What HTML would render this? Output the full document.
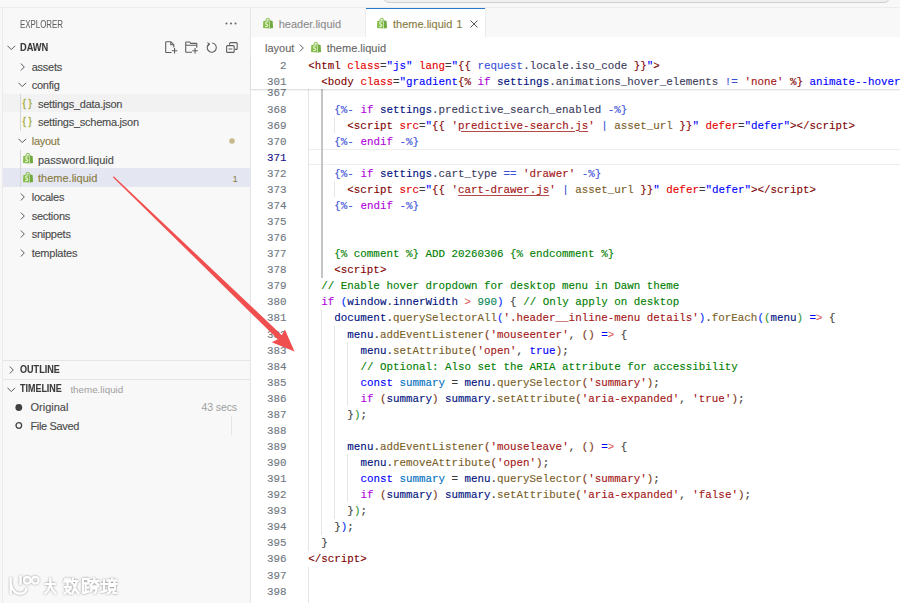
<!DOCTYPE html>
<html><head><meta charset="utf-8">
<style>
*{box-sizing:border-box;margin:0;padding:0}
html,body{width:900px;height:603px;overflow:hidden;background:#f8f8f8;font-family:"Liberation Sans",sans-serif;position:relative}
#topbar{position:absolute;left:0;top:0;width:900px;height:8px;background:#f8f8f8;border-bottom:1px solid #ececec}
#cmd{position:absolute;left:382.5px;top:-20px;width:507px;height:23px;border:1.3px solid #cfcfcf;border-radius:6px;background:#efefef}
#side{position:absolute;left:2px;top:8px;width:249px;height:595px;background:#f8f8f8;border-left:1px solid #ebebeb;border-right:1px solid #e5e5e5}
.t{position:absolute;font-size:11px;line-height:14px;height:14px;color:#4a4a4a;white-space:pre;-webkit-text-stroke:0.12px currentColor}
.ls{letter-spacing:-0.25px}
.hdr{font-weight:bold;font-size:9.6px;color:#3b3b3b}
.sel{position:absolute;left:0;width:248px;height:18.3px}
svg{position:absolute;overflow:visible}
#editor{position:absolute;left:251px;top:37px;width:649px;height:566px;background:#fff}
#tabs{position:absolute;left:251px;top:8px;width:649px;height:30px;background:#f8f8f8;border-bottom:1px solid #e5e5e5}
.ln{position:absolute;left:251px;width:35.5px;text-align:right;height:16px;font-family:"Liberation Mono",monospace;font-size:10.85px;line-height:16px;color:#6e7681;-webkit-text-stroke:0.12px currentColor}
.ln.cur{color:#171184}
.cl{position:absolute;height:16px;font-family:"Liberation Mono",monospace;font-size:10.85px;line-height:16px;white-space:pre;color:#3b3b3b;-webkit-text-stroke:0.12px currentColor}
.ig{position:absolute;width:1px;height:16.2px;background:#e5e5e5}
#sticky{position:absolute;left:251px;top:56.82px;width:649px;height:32.14px;background:#fff;box-shadow:0 1px 1.5px rgba(0,0,0,0.16)}
.curl{position:absolute;left:308.3px;width:592px;height:16.07px;border-top:1.7px solid #eeeeee;border-bottom:1.7px solid #eeeeee}
.ig.ag{background:#c4c4c4;width:1.3px}
</style></head><body>
<div id="topbar"><div id="cmd"></div></div>

<div id="side"></div>
<!-- sidebar content, absolute to body -->
<div class="sel" style="left:3px;top:94px;background:#f2f2f2;width:247px"></div>
<div class="sel" style="left:3px;top:168.3px;background:#e4e6f1;width:247px;height:18.4px"></div>

<div class="t" style="left:20px;top:17.5px;font-size:10px;color:#5f5f5f;-webkit-text-stroke:0.05px #5f5f5f;transform:scaleX(0.79);transform-origin:0 0">EXPLORER</div>
<svg style="left:225px;top:22px" width="12" height="3"><circle cx="1.5" cy="1.5" r="1" fill="#616161"/><circle cx="6" cy="1.5" r="1" fill="#616161"/><circle cx="10.5" cy="1.5" r="1" fill="#616161"/></svg>

<!-- DAWN -->
<svg style="left:7px;top:45px" width="9" height="6"><path d="M0.5 0.8 L4.3 4.6 L8.1 0.8" fill="none" stroke="#5a5a5a" stroke-width="1"/></svg>
<div class="t hdr" style="left:20px;top:40.5px;font-size:10.3px;transform:scaleX(0.9);transform-origin:0 0">DAWN</div>
<!-- action icons -->
<svg style="left:165px;top:41px" width="13" height="13" viewBox="0 0 13 13"><path d="M6.5 11.5H1.2Q0.7 11.5 0.7 11V1.2Q0.7 0.7 1.2 0.7H5.8L8.8 3.7V6.5 M5.8 0.7V3.7H8.8 M6.8 9.8H12.3 M9.55 7V12.5" fill="none" stroke="#5f5f5f" stroke-width="1.1"/></svg>
<svg style="left:184.5px;top:41px" width="14" height="13" viewBox="0 0 14 13"><path d="M7 11.3H1.2Q0.7 11.3 0.7 10.8V1.5Q0.7 1 1.2 1H4.6L5.8 2.4H11.3Q11.8 2.4 11.8 2.9V6.8 M0.7 4.3H11.8 M7.3 9.8H12.8 M10.05 7V12.5" fill="none" stroke="#5f5f5f" stroke-width="1.1"/></svg>
<svg style="left:205.5px;top:41.5px" width="12" height="11" viewBox="0 0 12 11"><path d="M3 1.9 A4.6 4.6 0 1 0 6.2 1" fill="none" stroke="#5f5f5f" stroke-width="1.1"/><path d="M1.4 0.6 L3.4 1.9 L2.2 4" fill="none" stroke="#5f5f5f" stroke-width="1.1"/></svg>
<svg style="left:225.5px;top:41.5px" width="12" height="11" viewBox="0 0 12 11"><path d="M3.6 2.8V1.6Q3.6 0.6 4.6 0.6H10.2Q11.2 0.6 11.2 1.6V6.4Q11.2 7.4 10.2 7.4H9 M1.6 3.6H7.2Q8.2 3.6 8.2 4.6V9.4Q8.2 10.4 7.2 10.4H1.6Q0.6 10.4 0.6 9.4V4.6Q0.6 3.6 1.6 3.6Z M2.5 7H6.3" fill="none" stroke="#5f5f5f" stroke-width="1.1"/></svg>

<!-- tree -->
<svg style="left:20px;top:63px" width="6" height="8"><path d="M0.8 0.5 L4.3 4 L0.8 7.5" fill="none" stroke="#5a5a5a" stroke-width="1"/></svg>
<div class="t ls" style="left:31.7px;top:59.5px">assets</div>
<svg style="left:18px;top:82px" width="9" height="6"><path d="M0.5 0.8 L4.3 4.6 L8.1 0.8" fill="none" stroke="#5a5a5a" stroke-width="1"/></svg>
<div class="t ls" style="left:31.7px;top:78px">config</div>
<div style="position:absolute;left:19.5px;top:94px;width:1px;height:37px;background:#d6d6d6"></div>
<div class="t" style="left:22.5px;top:96.5px;color:#a3ad3c;font-size:10px;-webkit-text-stroke:0.3px #a3ad3c">{ }</div>
<div class="t ls" style="left:38px;top:96.5px">settings_data.json</div>
<div class="t" style="left:22.5px;top:115px;color:#a3ad3c;font-size:10px;-webkit-text-stroke:0.3px #a3ad3c">{ }</div>
<div class="t ls" style="left:38px;top:115px">settings_schema.json</div>
<svg style="left:18px;top:138px" width="9" height="6"><path d="M0.5 0.8 L4.3 4.6 L8.1 0.8" fill="none" stroke="#5a5a5a" stroke-width="1"/></svg>
<div class="t ls" style="left:31.7px;top:134px;color:#887b3f">layout</div>
<svg style="left:229px;top:138px" width="6" height="6"><circle cx="3" cy="3" r="2.8" fill="#c9b98a"/></svg>
<div style="position:absolute;left:19.5px;top:150px;width:1px;height:37px;background:#d6d6d6"></div>
<svg style="left:22.5px;top:153px" width="10" height="11" viewBox="0 0 10 11" id="shop1"><path d="M2.8 2.6 Q3.2 0.3 4.9 0.3 Q6.4 0.4 6.6 2.6" fill="none" stroke="#8dc15a" stroke-width="1.1"/><path d="M0.3 2.9 L6.4 2.3 L6.4 10.4 L0 10 Z" fill="#86bd4e"/><path d="M6.9 2.3 L9.6 2.9 L10.1 9.9 L6.9 10.4 Z" fill="#72aa40"/><path d="M5 3.9 Q2.6 3.6 2.7 5.2 Q2.9 6.4 4 6.6 Q5 7.1 4.2 8.3 Q3.3 8.8 2.2 8.2" fill="none" stroke="#e2f3c8" stroke-width="1.2"/></svg>
<div class="t" style="left:38px;top:152.5px">password.liquid</div>
<svg style="left:22.5px;top:171.5px" width="10" height="11" viewBox="0 0 10 11"><path d="M2.8 2.6 Q3.2 0.3 4.9 0.3 Q6.4 0.4 6.6 2.6" fill="none" stroke="#8dc15a" stroke-width="1.1"/><path d="M0.3 2.9 L6.4 2.3 L6.4 10.4 L0 10 Z" fill="#86bd4e"/><path d="M6.9 2.3 L9.6 2.9 L10.1 9.9 L6.9 10.4 Z" fill="#72aa40"/><path d="M5 3.9 Q2.6 3.6 2.7 5.2 Q2.9 6.4 4 6.6 Q5 7.1 4.2 8.3 Q3.3 8.8 2.2 8.2" fill="none" stroke="#e2f3c8" stroke-width="1.2"/></svg>
<div class="t" style="left:38px;top:171px;color:#887b3f">theme.liquid</div>
<div class="t" style="left:232.5px;top:171.5px;color:#887b3f;font-size:9.5px;-webkit-text-stroke:0">1</div>
<svg style="left:20px;top:193px" width="6" height="8"><path d="M0.8 0.5 L4.3 4 L0.8 7.5" fill="none" stroke="#5a5a5a" stroke-width="1"/></svg>
<div class="t ls" style="left:31.7px;top:190px">locales</div>
<svg style="left:20px;top:211.5px" width="6" height="8"><path d="M0.8 0.5 L4.3 4 L0.8 7.5" fill="none" stroke="#5a5a5a" stroke-width="1"/></svg>
<div class="t ls" style="left:31.7px;top:208.5px">sections</div>
<svg style="left:20px;top:230px" width="6" height="8"><path d="M0.8 0.5 L4.3 4 L0.8 7.5" fill="none" stroke="#5a5a5a" stroke-width="1"/></svg>
<div class="t ls" style="left:31.7px;top:227px">snippets</div>
<svg style="left:20px;top:248.5px" width="6" height="8"><path d="M0.8 0.5 L4.3 4 L0.8 7.5" fill="none" stroke="#5a5a5a" stroke-width="1"/></svg>
<div class="t ls" style="left:31.7px;top:245.5px">templates</div>

<!-- outline / timeline -->
<div style="position:absolute;left:3px;top:360px;width:247px;height:1px;background:#e5e5e5"></div>
<svg style="left:9px;top:366px" width="6" height="8"><path d="M0.8 0.5 L4.3 4 L0.8 7.5" fill="none" stroke="#5a5a5a" stroke-width="1"/></svg>
<div class="t hdr" style="left:19.8px;top:363px;font-size:10.3px;transform:scaleX(0.88);transform-origin:0 0">OUTLINE</div>
<div style="position:absolute;left:3px;top:379px;width:247px;height:1px;background:#e5e5e5"></div>
<svg style="left:7px;top:386.5px" width="9" height="6"><path d="M0.5 0.8 L4.3 4.6 L8.1 0.8" fill="none" stroke="#5a5a5a" stroke-width="1"/></svg>
<div class="t hdr" style="left:20px;top:382px;font-size:10.3px;transform:scaleX(0.87);transform-origin:0 0">TIMELINE</div>
<div class="t" style="left:70.4px;top:382.5px;font-size:9.8px;color:#a0a0a0;-webkit-text-stroke:0">theme.liquid</div>
<svg style="left:15px;top:403.5px" width="8" height="8"><circle cx="3.8" cy="3.5" r="3.4" fill="#424242"/></svg>
<div class="t" style="left:30.5px;top:400px">Original</div>
<div class="t" style="left:201.5px;top:400px;color:#a0a0a0;font-size:10.5px;-webkit-text-stroke:0;letter-spacing:-0.1px">43 secs</div>
<svg style="left:15px;top:422px" width="8" height="8"><circle cx="3.8" cy="3.5" r="2.8" fill="none" stroke="#424242" stroke-width="1.3"/></svg>
<div class="t" style="left:30.5px;top:418.5px;letter-spacing:-0.35px">File Saved</div>
<div style="position:absolute;left:231px;top:416px;width:1px;height:19px;background:#e6e6e6"></div>

<div id="tabs">
  <div style="position:absolute;left:114px;top:0;width:120px;height:30px;background:#fff;border-top:1.5px solid #2b78c6"></div>
  <div style="position:absolute;left:113.5px;top:0;width:1px;height:29px;background:#ececec"></div>
  <div style="position:absolute;left:234px;top:0;width:1px;height:29px;background:#ececec"></div>
</div>
<svg style="left:262.7px;top:18px" width="10" height="11" viewBox="0 0 10 11"><path d="M2.8 2.6 Q3.2 0.3 4.9 0.3 Q6.4 0.4 6.6 2.6" fill="none" stroke="#8dc15a" stroke-width="1.1"/><path d="M0.3 2.9 L6.4 2.3 L6.4 10.4 L0 10 Z" fill="#86bd4e"/><path d="M6.9 2.3 L9.6 2.9 L10.1 9.9 L6.9 10.4 Z" fill="#72aa40"/><path d="M5 3.9 Q2.6 3.6 2.7 5.2 Q2.9 6.4 4 6.6 Q5 7.1 4.2 8.3 Q3.3 8.8 2.2 8.2" fill="none" stroke="#e2f3c8" stroke-width="1.2"/></svg>
<div class="t" style="left:278.7px;top:17px;color:#8c8c8c;-webkit-text-stroke:0.1px #8c8c8c">header.liquid</div>
<svg style="left:377px;top:18px" width="10" height="11" viewBox="0 0 10 11"><path d="M2.8 2.6 Q3.2 0.3 4.9 0.3 Q6.4 0.4 6.6 2.6" fill="none" stroke="#8dc15a" stroke-width="1.1"/><path d="M0.3 2.9 L6.4 2.3 L6.4 10.4 L0 10 Z" fill="#86bd4e"/><path d="M6.9 2.3 L9.6 2.9 L10.1 9.9 L6.9 10.4 Z" fill="#72aa40"/><path d="M5 3.9 Q2.6 3.6 2.7 5.2 Q2.9 6.4 4 6.6 Q5 7.1 4.2 8.3 Q3.3 8.8 2.2 8.2" fill="none" stroke="#e2f3c8" stroke-width="1.2"/></svg>
<div class="t" style="left:393px;top:17px;color:#887b3f">theme.liquid</div>
<div class="t" style="left:456.5px;top:17.3px;color:#887b3f;font-size:10.5px">1</div>
<svg style="left:469.5px;top:20px" width="8" height="8"><path d="M0.5 0.5L7.5 7.5M7.5 0.5L0.5 7.5" stroke="#5a5a5a" stroke-width="1"/></svg>

<div id="editor"></div>
<!-- breadcrumbs -->
<div class="t" style="left:265px;top:41px;color:#666;-webkit-text-stroke:0.1px #666">layout</div>
<svg style="left:299px;top:43.5px" width="6" height="8"><path d="M0.8 0.5 L4.3 4 L0.8 7.5" fill="none" stroke="#616161" stroke-width="1"/></svg>
<svg style="left:311px;top:42px" width="10" height="11" viewBox="0 0 10 11"><path d="M2.8 2.6 Q3.2 0.3 4.9 0.3 Q6.4 0.4 6.6 2.6" fill="none" stroke="#8dc15a" stroke-width="1.1"/><path d="M0.3 2.9 L6.4 2.3 L6.4 10.4 L0 10 Z" fill="#86bd4e"/><path d="M6.9 2.3 L9.6 2.9 L10.1 9.9 L6.9 10.4 Z" fill="#72aa40"/><path d="M5 3.9 Q2.6 3.6 2.7 5.2 Q2.9 6.4 4 6.6 Q5 7.1 4.2 8.3 Q3.3 8.8 2.2 8.2" fill="none" stroke="#e2f3c8" stroke-width="1.2"/></svg>
<div class="t" style="left:326.7px;top:41px;color:#666;-webkit-text-stroke:0.1px #666">theme.liquid</div>

<div class="ln" style="top:85.45px">367</div>
<div class="ig" style="left:308.30px;top:84.55px"></div>
<div class="ig ag" style="left:321.32px;top:84.55px"></div>
<div class="ln" style="top:101.52px">368</div>
<div class="ig" style="left:308.30px;top:100.62px"></div>
<div class="ig ag" style="left:321.32px;top:100.62px"></div>
<div class="cl" style="top:101.52px;left:334.34px"><span style="color:#3a50d8">{%-</span><span style="color:#3b3b3b"> </span><span style="color:#af00db">if</span><span style="color:#3b3b3b"> </span><span style="color:#001080">settings</span><span style="color:#3b3b5b">.predictive_search_enabled</span><span style="color:#3b3b3b"> </span><span style="color:#3a50d8">-%}</span></div>
<div class="ln" style="top:117.59px">369</div>
<div class="ig" style="left:308.30px;top:116.69px"></div>
<div class="ig ag" style="left:321.32px;top:116.69px"></div>
<div class="ig" style="left:334.34px;top:116.69px"></div>
<div class="cl" style="top:117.59px;left:347.36px"><span style="color:#800000">&lt;script</span><span style="color:#3b3b3b"> </span><span style="color:#e50000">src</span><span style="color:#3b3b3b">=</span><span style="color:#0000ff">&quot;</span><span style="color:#800000">{{</span><span style="color:#3b3b3b"> </span><span style="color:#a31515">&#x27;</span><span style="color:#a31515;text-decoration:underline;text-decoration-color:#b54848;text-underline-offset:2px">predictive-search.js</span><span style="color:#a31515">&#x27;</span><span style="color:#3b3b3b"> </span><span style="color:#3a50d8">|</span><span style="color:#3b3b3b"> </span><span style="color:#795e26">asset_url</span><span style="color:#3b3b3b"> </span><span style="color:#800000">}}</span><span style="color:#0000ff">&quot;</span><span style="color:#3b3b3b"> </span><span style="color:#e50000">defer</span><span style="color:#3b3b3b">=</span><span style="color:#0000ff">&quot;defer&quot;</span><span style="color:#800000">&gt;&lt;/script&gt;</span></div>
<div class="ln" style="top:133.66px">370</div>
<div class="ig" style="left:308.30px;top:132.76px"></div>
<div class="ig ag" style="left:321.32px;top:132.76px"></div>
<div class="cl" style="top:133.66px;left:334.34px"><span style="color:#3a50d8">{%-</span><span style="color:#3b3b3b"> </span><span style="color:#af00db">endif</span><span style="color:#3b3b3b"> </span><span style="color:#3a50d8">-%}</span></div>
<div class="curl" style="top:148.83px"></div>
<div class="ln cur" style="top:149.73px">371</div>
<div class="ig" style="left:308.30px;top:148.83px"></div>
<div class="ig ag" style="left:321.32px;top:148.83px"></div>
<div class="ln" style="top:165.80px">372</div>
<div class="ig" style="left:308.30px;top:164.90px"></div>
<div class="ig ag" style="left:321.32px;top:164.90px"></div>
<div class="cl" style="top:165.80px;left:334.34px"><span style="color:#3a50d8">{%-</span><span style="color:#3b3b3b"> </span><span style="color:#af00db">if</span><span style="color:#3b3b3b"> </span><span style="color:#001080">settings</span><span style="color:#3b3b5b">.cart_type</span><span style="color:#3b3b3b"> </span><span style="color:#3a50d8">==</span><span style="color:#3b3b3b"> </span><span style="color:#a31515">&#x27;drawer&#x27;</span><span style="color:#3b3b3b"> </span><span style="color:#3a50d8">-%}</span></div>
<div class="ln" style="top:181.87px">373</div>
<div class="ig" style="left:308.30px;top:180.97px"></div>
<div class="ig ag" style="left:321.32px;top:180.97px"></div>
<div class="ig" style="left:334.34px;top:180.97px"></div>
<div class="cl" style="top:181.87px;left:347.36px"><span style="color:#800000">&lt;script</span><span style="color:#3b3b3b"> </span><span style="color:#e50000">src</span><span style="color:#3b3b3b">=</span><span style="color:#0000ff">&quot;</span><span style="color:#800000">{{</span><span style="color:#3b3b3b"> </span><span style="color:#a31515">&#x27;</span><span style="color:#a31515;text-decoration:underline;text-decoration-color:#b54848;text-underline-offset:2px">cart-drawer.js</span><span style="color:#a31515">&#x27;</span><span style="color:#3b3b3b"> </span><span style="color:#3a50d8">|</span><span style="color:#3b3b3b"> </span><span style="color:#795e26">asset_url</span><span style="color:#3b3b3b"> </span><span style="color:#800000">}}</span><span style="color:#0000ff">&quot;</span><span style="color:#3b3b3b"> </span><span style="color:#e50000">defer</span><span style="color:#3b3b3b">=</span><span style="color:#0000ff">&quot;defer&quot;</span><span style="color:#800000">&gt;&lt;/script&gt;</span></div>
<div class="ln" style="top:197.94px">374</div>
<div class="ig" style="left:308.30px;top:197.04px"></div>
<div class="ig ag" style="left:321.32px;top:197.04px"></div>
<div class="cl" style="top:197.94px;left:334.34px"><span style="color:#3a50d8">{%-</span><span style="color:#3b3b3b"> </span><span style="color:#af00db">endif</span><span style="color:#3b3b3b"> </span><span style="color:#3a50d8">-%}</span></div>
<div class="ln" style="top:214.01px">375</div>
<div class="ig" style="left:308.30px;top:213.11px"></div>
<div class="ig ag" style="left:321.32px;top:213.11px"></div>
<div class="ln" style="top:230.08px">376</div>
<div class="ig" style="left:308.30px;top:229.18px"></div>
<div class="ig ag" style="left:321.32px;top:229.18px"></div>
<div class="ln" style="top:246.15px">377</div>
<div class="ig" style="left:308.30px;top:245.25px"></div>
<div class="ig ag" style="left:321.32px;top:245.25px"></div>
<div class="cl" style="top:246.15px;left:334.34px"><span style="color:#008000">{% comment %} ADD 20260306 {% endcomment %}</span></div>
<div class="ln" style="top:262.22px">378</div>
<div class="ig" style="left:308.30px;top:261.32px"></div>
<div class="ig ag" style="left:321.32px;top:261.32px"></div>
<div class="cl" style="top:262.22px;left:334.34px"><span style="color:#800000">&lt;script&gt;</span></div>
<div class="ln" style="top:278.29px">379</div>
<div class="ig" style="left:308.30px;top:277.39px"></div>
<div class="cl" style="top:278.29px;left:321.32px"><span style="color:#008000">// Enable hover dropdown for desktop menu in Dawn theme</span></div>
<div class="ln" style="top:294.36px">380</div>
<div class="ig" style="left:308.30px;top:293.46px"></div>
<div class="cl" style="top:294.36px;left:321.32px"><span style="color:#af00db">if</span><span style="color:#3b3b3b"> </span><span style="color:#0431fa">(</span><span style="color:#001080">window</span><span style="color:#3b3b3b">.</span><span style="color:#001080">innerWidth</span><span style="color:#3b3b3b"> </span><span style="color:#e06060">&gt;</span><span style="color:#3b3b3b"> </span><span style="color:#098658">990</span><span style="color:#0431fa">)</span><span style="color:#3b3b3b"> {</span><span style="color:#3b3b3b"> </span><span style="color:#008000">// Only apply on desktop</span></div>
<div class="ln" style="top:310.43px">381</div>
<div class="ig" style="left:308.30px;top:309.53px"></div>
<div class="ig" style="left:321.32px;top:309.53px"></div>
<div class="cl" style="top:310.43px;left:334.34px"><span style="color:#001080">document</span><span style="color:#3b3b3b">.</span><span style="color:#795e26">querySelectorAll</span><span style="color:#0431fa">(</span><span style="color:#a31515">&#x27;.header__inline-menu details&#x27;</span><span style="color:#0431fa">)</span><span style="color:#3b3b3b">.</span><span style="color:#795e26">forEach</span><span style="color:#0431fa">(</span><span style="color:#319331">(</span><span style="color:#001080">menu</span><span style="color:#319331">)</span><span style="color:#3b3b3b"> </span><span style="color:#0000ff">=</span><span style="color:#e06060">&gt;</span><span style="color:#3b3b3b"> {</span></div>
<div class="ln" style="top:326.50px">382</div>
<div class="ig" style="left:308.30px;top:325.60px"></div>
<div class="ig" style="left:321.32px;top:325.60px"></div>
<div class="ig" style="left:334.34px;top:325.60px"></div>
<div class="cl" style="top:326.50px;left:347.36px"><span style="color:#001080">menu</span><span style="color:#3b3b3b">.</span><span style="color:#795e26">addEventListener</span><span style="color:#7b3814">(</span><span style="color:#a31515">&#x27;mouseenter&#x27;</span><span style="color:#3b3b3b">, </span><span style="color:#7b3814">()</span><span style="color:#3b3b3b"> </span><span style="color:#0000ff">=</span><span style="color:#e06060">&gt;</span><span style="color:#3b3b3b"> {</span></div>
<div class="ln" style="top:342.57px">383</div>
<div class="ig" style="left:308.30px;top:341.67px"></div>
<div class="ig" style="left:321.32px;top:341.67px"></div>
<div class="ig" style="left:334.34px;top:341.67px"></div>
<div class="ig" style="left:347.36px;top:341.67px"></div>
<div class="cl" style="top:342.57px;left:360.38px"><span style="color:#001080">menu</span><span style="color:#3b3b3b">.</span><span style="color:#795e26">setAttribute</span><span style="color:#7b3814">(</span><span style="color:#a31515">&#x27;open&#x27;</span><span style="color:#3b3b3b">, </span><span style="color:#0000ff">true</span><span style="color:#7b3814">)</span><span style="color:#3b3b3b">;</span></div>
<div class="ln" style="top:358.64px">384</div>
<div class="ig" style="left:308.30px;top:357.74px"></div>
<div class="ig" style="left:321.32px;top:357.74px"></div>
<div class="ig" style="left:334.34px;top:357.74px"></div>
<div class="ig" style="left:347.36px;top:357.74px"></div>
<div class="cl" style="top:358.64px;left:360.38px"><span style="color:#008000">// Optional: Also set the ARIA attribute for accessibility</span></div>
<div class="ln" style="top:374.71px">385</div>
<div class="ig" style="left:308.30px;top:373.81px"></div>
<div class="ig" style="left:321.32px;top:373.81px"></div>
<div class="ig" style="left:334.34px;top:373.81px"></div>
<div class="ig" style="left:347.36px;top:373.81px"></div>
<div class="cl" style="top:374.71px;left:360.38px"><span style="color:#0000ff">const</span><span style="color:#3b3b3b"> </span><span style="color:#0070c1">summary</span><span style="color:#3b3b3b"> = </span><span style="color:#001080">menu</span><span style="color:#3b3b3b">.</span><span style="color:#795e26">querySelector</span><span style="color:#7b3814">(</span><span style="color:#a31515">&#x27;summary&#x27;</span><span style="color:#7b3814">)</span><span style="color:#3b3b3b">;</span></div>
<div class="ln" style="top:390.78px">386</div>
<div class="ig" style="left:308.30px;top:389.88px"></div>
<div class="ig" style="left:321.32px;top:389.88px"></div>
<div class="ig" style="left:334.34px;top:389.88px"></div>
<div class="ig" style="left:347.36px;top:389.88px"></div>
<div class="cl" style="top:390.78px;left:360.38px"><span style="color:#af00db">if</span><span style="color:#3b3b3b"> </span><span style="color:#7b3814">(</span><span style="color:#001080">summary</span><span style="color:#7b3814">)</span><span style="color:#3b3b3b"> </span><span style="color:#001080">summary</span><span style="color:#3b3b3b">.</span><span style="color:#795e26">setAttribute</span><span style="color:#7b3814">(</span><span style="color:#a31515">&#x27;aria-expanded&#x27;</span><span style="color:#3b3b3b">, </span><span style="color:#a31515">&#x27;true&#x27;</span><span style="color:#7b3814">)</span><span style="color:#3b3b3b">;</span></div>
<div class="ln" style="top:406.85px">387</div>
<div class="ig" style="left:308.30px;top:405.95px"></div>
<div class="ig" style="left:321.32px;top:405.95px"></div>
<div class="ig" style="left:334.34px;top:405.95px"></div>
<div class="cl" style="top:406.85px;left:347.36px"><span style="color:#3b3b3b">}</span><span style="color:#319331">)</span><span style="color:#3b3b3b">;</span></div>
<div class="ln" style="top:422.92px">388</div>
<div class="ig" style="left:308.30px;top:422.02px"></div>
<div class="ig" style="left:321.32px;top:422.02px"></div>
<div class="ig" style="left:334.34px;top:422.02px"></div>
<div class="ln" style="top:438.99px">389</div>
<div class="ig" style="left:308.30px;top:438.09px"></div>
<div class="ig" style="left:321.32px;top:438.09px"></div>
<div class="ig" style="left:334.34px;top:438.09px"></div>
<div class="cl" style="top:438.99px;left:347.36px"><span style="color:#001080">menu</span><span style="color:#3b3b3b">.</span><span style="color:#795e26">addEventListener</span><span style="color:#7b3814">(</span><span style="color:#a31515">&#x27;mouseleave&#x27;</span><span style="color:#3b3b3b">, </span><span style="color:#7b3814">()</span><span style="color:#3b3b3b"> </span><span style="color:#0000ff">=</span><span style="color:#e06060">&gt;</span><span style="color:#3b3b3b"> {</span></div>
<div class="ln" style="top:455.06px">390</div>
<div class="ig" style="left:308.30px;top:454.16px"></div>
<div class="ig" style="left:321.32px;top:454.16px"></div>
<div class="ig" style="left:334.34px;top:454.16px"></div>
<div class="ig" style="left:347.36px;top:454.16px"></div>
<div class="cl" style="top:455.06px;left:360.38px"><span style="color:#001080">menu</span><span style="color:#3b3b3b">.</span><span style="color:#795e26">removeAttribute</span><span style="color:#7b3814">(</span><span style="color:#a31515">&#x27;open&#x27;</span><span style="color:#7b3814">)</span><span style="color:#3b3b3b">;</span></div>
<div class="ln" style="top:471.13px">391</div>
<div class="ig" style="left:308.30px;top:470.23px"></div>
<div class="ig" style="left:321.32px;top:470.23px"></div>
<div class="ig" style="left:334.34px;top:470.23px"></div>
<div class="ig" style="left:347.36px;top:470.23px"></div>
<div class="cl" style="top:471.13px;left:360.38px"><span style="color:#0000ff">const</span><span style="color:#3b3b3b"> </span><span style="color:#0070c1">summary</span><span style="color:#3b3b3b"> = </span><span style="color:#001080">menu</span><span style="color:#3b3b3b">.</span><span style="color:#795e26">querySelector</span><span style="color:#7b3814">(</span><span style="color:#a31515">&#x27;summary&#x27;</span><span style="color:#7b3814">)</span><span style="color:#3b3b3b">;</span></div>
<div class="ln" style="top:487.20px">392</div>
<div class="ig" style="left:308.30px;top:486.30px"></div>
<div class="ig" style="left:321.32px;top:486.30px"></div>
<div class="ig" style="left:334.34px;top:486.30px"></div>
<div class="ig" style="left:347.36px;top:486.30px"></div>
<div class="cl" style="top:487.20px;left:360.38px"><span style="color:#af00db">if</span><span style="color:#3b3b3b"> </span><span style="color:#7b3814">(</span><span style="color:#001080">summary</span><span style="color:#7b3814">)</span><span style="color:#3b3b3b"> </span><span style="color:#001080">summary</span><span style="color:#3b3b3b">.</span><span style="color:#795e26">setAttribute</span><span style="color:#7b3814">(</span><span style="color:#a31515">&#x27;aria-expanded&#x27;</span><span style="color:#3b3b3b">, </span><span style="color:#a31515">&#x27;false&#x27;</span><span style="color:#7b3814">)</span><span style="color:#3b3b3b">;</span></div>
<div class="ln" style="top:503.27px">393</div>
<div class="ig" style="left:308.30px;top:502.37px"></div>
<div class="ig" style="left:321.32px;top:502.37px"></div>
<div class="ig" style="left:334.34px;top:502.37px"></div>
<div class="cl" style="top:503.27px;left:347.36px"><span style="color:#3b3b3b">}</span><span style="color:#319331">)</span><span style="color:#3b3b3b">;</span></div>
<div class="ln" style="top:519.34px">394</div>
<div class="ig" style="left:308.30px;top:518.44px"></div>
<div class="ig" style="left:321.32px;top:518.44px"></div>
<div class="cl" style="top:519.34px;left:334.34px"><span style="color:#3b3b3b">}</span><span style="color:#0431fa">)</span><span style="color:#3b3b3b">;</span></div>
<div class="ln" style="top:535.41px">395</div>
<div class="ig" style="left:308.30px;top:534.51px"></div>
<div class="cl" style="top:535.41px;left:321.32px"><span style="color:#3b3b3b">}</span></div>
<div class="ln" style="top:551.48px">396</div>
<div class="cl" style="top:551.48px;left:308.30px"><span style="color:#800000">&lt;/script&gt;</span></div>
<div class="ln" style="top:567.55px">397</div>
<div class="ig" style="left:308.30px;top:566.65px"></div>
<div class="ln" style="top:583.62px">398</div>
<div class="ig" style="left:308.30px;top:582.72px"></div>
<div class="ln" style="top:599.69px">399</div>
<div class="ig" style="left:308.30px;top:598.79px"></div>
<div class="cl" style="top:599.69px;left:321.32px"><span style="color:#800000">&lt;/body&gt;</span></div>
<div id="sticky"></div>
<div class="ln" style="top:57.72px">2</div>
<div class="cl" style="top:57.72px;left:308.30px"><span style="color:#800000">&lt;html</span><span style="color:#3b3b3b"> </span><span style="color:#e50000">class</span><span style="color:#3b3b3b">=</span><span style="color:#0000ff">&quot;js&quot;</span><span style="color:#3b3b3b"> </span><span style="color:#e50000">lang</span><span style="color:#3b3b3b">=</span><span style="color:#0000ff">&quot;</span><span style="color:#800000">{{</span><span style="color:#3b3b3b"> </span><span style="color:#3a50d8">request</span><span style="color:#3b3b5b">.locale.iso_code</span><span style="color:#3b3b3b"> </span><span style="color:#800000">}}</span><span style="color:#0000ff">&quot;</span><span style="color:#800000">&gt;</span></div>
<div class="ln" style="top:73.79px">301</div>
<div class="cl" style="top:73.79px;left:321.32px"><span style="color:#800000">&lt;body</span><span style="color:#3b3b3b"> </span><span style="color:#e50000">class</span><span style="color:#3b3b3b">=</span><span style="color:#0000ff">&quot;gradient</span><span style="color:#800000">{%</span><span style="color:#3b3b3b"> </span><span style="color:#af00db">if</span><span style="color:#3b3b3b"> </span><span style="color:#001080">settings</span><span style="color:#3b3b5b">.animations_hover_elements</span><span style="color:#3b3b3b"> </span><span style="color:#3a50d8">!=</span><span style="color:#3b3b3b"> </span><span style="color:#a31515">&#x27;none&#x27;</span><span style="color:#3b3b3b"> </span><span style="color:#800000">%}</span><span style="color:#0000ff"> animate--hover-default</span><span style="color:#800000">{%</span><span style="color:#3b3b3b"> </span><span style="color:#af00db">endif</span><span style="color:#3b3b3b"> </span><span style="color:#800000">%}</span><span style="color:#0000ff">&quot;</span><span style="color:#800000">&gt;</span></div>

<!-- red arrow -->
<svg style="left:0;top:0" width="900" height="603"><polygon points="112.88,177.13 113.72,176.27 281.80,335.15 284.90,329.50 294.50,351.50 271.80,342.20 277.78,339.33" fill="#f04f4f"/></svg>

<!-- watermark -->
<svg style="left:0;top:565px" width="130" height="38" viewBox="0 0 130 38">
<defs><filter id="sh" x="-20%" y="-30%" width="140%" height="160%"><feGaussianBlur in="SourceAlpha" stdDeviation="0.9" result="b"/><feFlood flood-color="#000" flood-opacity="0.5"/><feComposite in2="b" operator="in" result="s"/><feMerge><feMergeNode in="s"/><feMergeNode in="SourceGraphic"/></feMerge></filter></defs>
<g filter="url(#sh)" fill="none" stroke="#fff" stroke-width="1.9" stroke-linecap="round" stroke-linejoin="round">
<path d="M10.8 13 V28.2"/>
<path d="M11 19.5 Q13 28.5 20 28.8 Q25 28.5 26.5 24"/>
<path d="M20.5 11.5 V19"/>
<circle cx="27.2" cy="15.3" r="3.3"/><circle cx="35.2" cy="15.3" r="3.3"/>
<path d="M45.5 19 H55 M50.2 13.5 V18.5 Q49.5 25 45 28.5 M50.5 20 Q52 25.5 55.5 28.5"/>
<path d="M64 16.5 H71 M67.5 13.5 V22 M65 14 L66 16 M70 14 L69 16 M64.5 22 H71 M66 24 L70 28.5 M70.5 23.5 L64.5 28.5 M73 13.5 L72 18 M72.5 16 H78 M76.5 17 Q75 24 72 28.5 M73.5 19 Q75 25 78.5 28.5"/>
<path d="M83 14 H88.5 V18.5 H83 Z M85.7 18.5 V27.5 M85.7 22.5 H88.5 M83 20.5 V28 L88.5 26.5 M90 16 H98.5 M94.2 13.5 V16 L90.5 20 M94.2 16 L98.5 20 M90.5 21.5 H98 M92 23.5 H96.5 Q96.5 27 94.5 28.5 M91.5 23.5 L91 26"/>
<path d="M101.5 19 H106.5 M104 15 V26.5 M101.5 27 L106.5 25.5 M107.5 15.5 H116.5 M112 13.5 V15.5 M109.5 17 L110 18.5 M114.5 17 L114 18.5 M107.5 19 H116.5 M109 21 H115 V24.5 H109 Z M110.5 24.5 Q110.5 27.5 107.5 28.5 M113.5 24.5 V28 H116.5"/>
</g></svg>
</body></html>
